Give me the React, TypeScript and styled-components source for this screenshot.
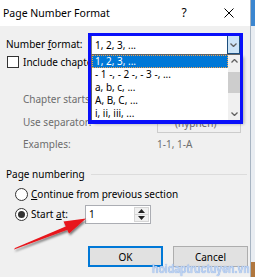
import React from "react";
import styled, { createGlobalStyle } from "styled-components";

const Global = createGlobalStyle`
  html, body { margin: 0; padding: 0; overflow: hidden; background: #f0f0f0; }
  body { font-family: "Noto Sans", "Open Sans", sans-serif; font-size: 10px; color: #000; }
  #root { width: 255px; height: 277px; }
`;

const Frame = styled.div`
  position: relative;
  width: 255px;
  height: 277px;
  display: flex;
  overflow: hidden;
  background: linear-gradient(#3b86d0 0 26px, #e9edf2 26px 262px, #b0773f 262px);
`;

const Dialog = styled.div`
  width: 251px;
  height: 277px;
  display: flex;
  flex-direction: column;
  background: #f0f0f0;
  border-right: 1px solid #a7b4c2;
  box-sizing: border-box;
`;

const TitleBar = styled.div`
  height: 26px;
  flex: none;
  background: #fff;
  display: flex;
  align-items: center;
  padding-left: 3px;
`;

const Title = styled.div`
  flex: 1;
  font-size: 10.5px;
  line-height: 14px;
`;

const Help = styled.div`
  width: 40px;
  margin-right: 4px;
  text-align: center;
  font-size: 12px;
  line-height: 14px;
`;

const Close = styled.div`
  width: 42px;
  display: flex;
  justify-content: center;
  align-items: center;
`;

const Body = styled.div`
  flex: 1;
  display: flex;
  flex-direction: column;
  padding: 8px 0 0 6px;
`;

const Row = styled.div<{ $h: number; $mt?: number; $pl?: number }>`
  height: ${(p) => p.$h}px;
  margin-top: ${(p) => p.$mt ?? 0}px;
  padding-left: ${(p) => p.$pl ?? 0}px;
  display: flex;
  align-items: center;
  flex: none;
`;

const Label = styled.div<{ $w?: number; $disabled?: boolean }>`
  width: ${(p) => (p.$w ? `${p.$w}px` : "auto")};
  flex: none;
  white-space: nowrap;
  line-height: 13px;
  color: ${(p) => (p.$disabled ? "#6d6d6d" : "#000")};
`;

const Combo = styled.div<{ $w: number; $disabled?: boolean; $pl?: number }>`
  width: ${(p) => p.$w}px;
  height: 21px;
  box-sizing: border-box;
  border: 1px solid ${(p) => (p.$disabled ? "#cccccc" : "#7a7a7a")};
  background: ${(p) => (p.$disabled ? "#f0f0f0" : "#fff")};
  display: flex;
  align-items: center;
  padding-left: ${(p) => p.$pl ?? 3}px;
  white-space: nowrap;
  color: ${(p) => (p.$disabled ? "#6d6d6d" : "#000")};
`;

const Check = styled.div`
  width: 12px;
  height: 12px;
  box-sizing: border-box;
  border: 1px solid #333;
  background: #fff;
  margin-left: 1px;
  margin-right: 4px;
`;

const GroupHead = styled.div`
  display: flex;
  align-items: center;
  height: 14px;
  margin-top: 16px;
  padding-right: 3px;
  flex: none;
`;

const GroupLine = styled.div`
  flex: 1;
  height: 1px;
  background: #dcdcdc;
  margin-left: 6px;
`;

const Radio = styled.div<{ $on?: boolean }>`
  width: 13px;
  height: 13px;
  box-sizing: border-box;
  border-radius: 50%;
  border: 1px solid #333;
  background: #fff;
  margin-right: 3px;
  display: flex;
  align-items: center;
  justify-content: center;
  flex: none;
  &::after {
    content: "";
    display: ${(p) => (p.$on ? "block" : "none")};
    width: 7px;
    height: 7px;
    border-radius: 50%;
    background: #333;
  }
`;

const Spin = styled.div`
  width: 66px;
  height: 19px;
  box-sizing: border-box;
  border: 1px solid #abadb3;
  background: #fff;
  display: flex;
`;

const SpinText = styled.div`
  flex: 1;
  padding-left: 3px;
  line-height: 17px;
`;

const SpinBtns = styled.div`
  width: 15px;
  display: flex;
  flex-direction: column;
  padding: 1px;
`;

const SpinBtn = styled.div`
  flex: 1;
  display: flex;
  align-items: center;
  justify-content: center;
  background: #f0f0f0;
  border: 1px solid #d6d6d6;
  & + & { border-top: none; }
`;

const Buttons = styled.div`
  display: flex;
  gap: 10px;
  padding-left: 82px;
  margin-top: 22px;
  flex: none;
`;

const Button = styled.div<{ $focus?: boolean }>`
  width: 75px;
  height: 21px;
  box-sizing: border-box;
  border: ${(p) => (p.$focus ? "2px solid #0078d7" : "1px solid #adadad")};
  background: #e1e1e1;
  display: flex;
  align-items: center;
  justify-content: center;
`;

const ComboTop = styled.div`
  position: absolute;
  left: 91px;
  top: 34px;
  width: 150px;
  height: 21px;
  box-sizing: border-box;
  background: #fff;
  border: 1px solid #7a7a7a;
  display: flex;
  align-items: center;
`;

const ComboText = styled.div`
  flex: 1;
  padding-left: 3px;
`;

const DropBtn = styled.div`
  width: 13px;
  height: 19px;
  box-sizing: border-box;
  background: #cce4f7;
  border: 1px solid #1c4e7e;
  display: flex;
  align-items: center;
  justify-content: center;
`;

const Popup = styled.div`
  position: absolute;
  left: 91px;
  top: 54px;
  width: 150px;
  height: 67px;
  box-sizing: border-box;
  background: #fff;
  border: 1px solid #646464;
  box-shadow: 3px 3px 3px rgba(0, 0, 0, 0.3);
  display: flex;
`;

const List = styled.div`
  flex: 1;
  display: flex;
  flex-direction: column;
`;

const Item = styled.div<{ $sel?: boolean }>`
  height: 13px;
  line-height: 12px;
  padding-left: 3px;
  white-space: nowrap;
  box-sizing: border-box;
  background: ${(p) => (p.$sel ? "#0078d7" : "transparent")};
  color: ${(p) => (p.$sel ? "#fff" : "#000")};
  outline: ${(p) => (p.$sel ? "1px dotted #f0a050" : "none")};
  outline-offset: -1px;
`;

const Scroll = styled.div`
  width: 12px;
  background: #f0f0f0;
  display: flex;
  flex-direction: column;
  align-items: center;
`;

const Arrow = styled.div<{ $grow?: boolean }>`
  height: 12px;
  display: flex;
  align-items: center;
  justify-content: center;
  margin-top: ${(p) => (p.$grow ? "auto" : "0")};
`;

const Thumb = styled.div`
  width: 12px;
  height: 21px;
  background: #cdcdcd;
  margin-top: 5px;
  flex: none;
`;

const Highlight = styled.div`
  position: absolute;
  left: 88px;
  top: 33px;
  width: 155px;
  height: 91px;
  box-sizing: border-box;
  border: 3px solid #0a10fa;
  border-bottom-width: 4px;
  pointer-events: none;
`;

const RedArrow = styled.svg`
  position: absolute;
  left: 0;
  top: 205px;
`;

const Watermark = styled.div`
  position: absolute;
  left: 152px;
  top: 261px;
  font-family: "Liberation Sans", Arial, sans-serif;
  font-weight: bold;
  font-size: 13.5px;
  line-height: 16px;
  white-space: nowrap;
  transform: scaleX(0.78);
  transform-origin: left top;
  color: #bcd2f2;
  text-shadow: 0 0 1px #6f98d8;
`;

const Chevron = ({ up }: { up?: boolean }) => (
  <svg width="7" height="4" viewBox="0 0 7 4">
    <path
      d={up ? "M0.5 3.5 L3.5 0.5 L6.5 3.5" : "M0.5 0.5 L3.5 3.5 L6.5 0.5"}
      fill="none"
      stroke="#606060"
      strokeWidth="1.3"
    />
  </svg>
);

export default function App() {
  return (
    <>
      <Global />
      <Frame>
        <Dialog>
          <TitleBar>
            <Title>Page Number Format</Title>
            <Help>?</Help>
            <Close>
              <svg width="10" height="10" viewBox="0 0 10 10">
                <path d="M0.5 0.5 L9.5 9.5 M9.5 0.5 L0.5 9.5" stroke="#000" strokeWidth="1" />
              </svg>
            </Close>
          </TitleBar>
          <Body>
            <Row $h={21}>
              <Label $w={85}>
                Number <u>f</u>ormat:
              </Label>
              <Combo $w={150}>1, 2, 3, ...</Combo>
            </Row>
            <Row $h={12} $mt={1}>
              <Check />
              <Label>Include chapter number</Label>
            </Row>
            <Row $h={21} $mt={21} $pl={17}>
              <Label $w={134} $disabled>
                Chapter starts with style:
              </Label>
              <Combo $w={84} $disabled>
                Heading 1
              </Combo>
            </Row>
            <Row $h={21} $mt={2} $pl={17}>
              <Label $w={134} $disabled>
                Use separator:
              </Label>
              <Combo $w={84} $disabled $pl={17}>
                (hyphen)
              </Combo>
            </Row>
            <Row $h={14} $mt={4} $pl={17}>
              <Label $w={134} $disabled>
                Examples:
              </Label>
              <Label $disabled>1-1, 1-A</Label>
            </Row>
            <GroupHead>
              <Label>Page numbering</Label>
              <GroupLine />
            </GroupHead>
            <Row $h={13} $mt={7} $pl={9}>
              <Radio />
              <Label>
                <u>C</u>ontinue from previous section
              </Label>
            </Row>
            <Row $h={19} $mt={4} $pl={9}>
              <Radio $on />
              <Label $w={54}>
                Start <u>a</u>t:
              </Label>
              <Spin>
                <SpinText>1</SpinText>
                <SpinBtns>
                  <SpinBtn>
                    <svg width="7" height="4" viewBox="0 0 7 4">
                      <path d="M0 4 L3.5 0 L7 4 Z" fill="#222" />
                    </svg>
                  </SpinBtn>
                  <SpinBtn>
                    <svg width="7" height="4" viewBox="0 0 7 4">
                      <path d="M0 0 L3.5 4 L7 0 Z" fill="#222" />
                    </svg>
                  </SpinBtn>
                </SpinBtns>
              </Spin>
            </Row>
            <Buttons>
              <Button $focus>OK</Button>
              <Button>Cancel</Button>
            </Buttons>
          </Body>
        </Dialog>

        <ComboTop>
          <ComboText>1, 2, 3, ...</ComboText>
          <DropBtn>
            <Chevron />
          </DropBtn>
        </ComboTop>
        <Popup>
          <List>
            <Item $sel>1, 2, 3, ...</Item>
            <Item>- 1 -, - 2 -, - 3 -, ...</Item>
            <Item>a, b, c, ...</Item>
            <Item>A, B, C, ...</Item>
            <Item>i, ii, iii, ...</Item>
          </List>
          <Scroll>
            <Arrow>
              <Chevron up />
            </Arrow>
            <Thumb />
            <Arrow $grow>
              <Chevron />
            </Arrow>
          </Scroll>
        </Popup>
        <Highlight />

        <RedArrow width="100" height="55" viewBox="0 205 100 55">
          <defs>
            <filter id="sh" x="-30%" y="-30%" width="160%" height="160%">
              <feDropShadow dx="1" dy="2" stdDeviation="1.3" floodColor="#000" floodOpacity="0.5" />
            </filter>
          </defs>
          <g filter="url(#sh)">
            <path d="M14 249.5 L15 248 L68 225.5 L69.5 229 Z" fill="#e8141b" />
            <path d="M86 218.5 L63.5 221.5 L69 233.5 Z" fill="#e8141b" />
          </g>
        </RedArrow>

        <Watermark>hoidaptructuyen.vn</Watermark>
      </Frame>
    </>
  );
}
